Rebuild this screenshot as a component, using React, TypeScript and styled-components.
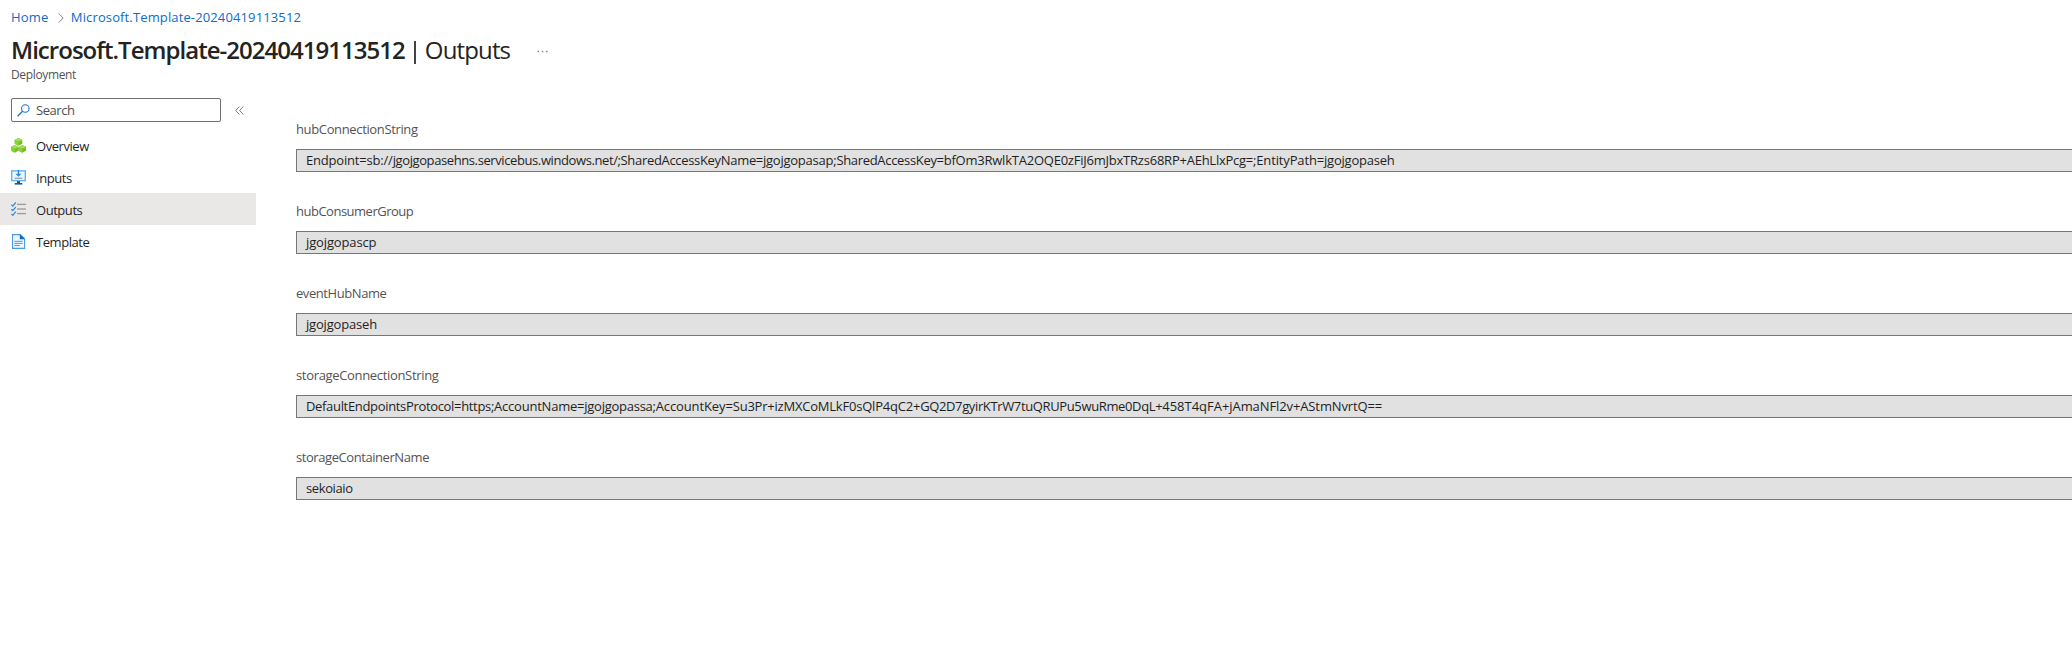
import React from 'react';
import styled, { createGlobalStyle } from 'styled-components';

const GlobalStyle = createGlobalStyle`
  * { box-sizing: border-box; }
  body {
    margin: 0;
    background: #fff;
    overflow: hidden;
    color: #1f1f1f;
    font-family: 'Open Sans', 'Noto Sans', sans-serif;
    font-size: 13px;
  }
`;

const Page = styled.div`
  height: 665px;
  padding-top: 7px;
  overflow: hidden;
`;

const Breadcrumb = styled.nav`
  display: flex;
  align-items: center;
  height: 20px;
  padding-left: 11px;
`;

const Crumb = styled.a<{ $tracking?: number }>`
  color: #0b6ccb;
  line-height: 20px;
  letter-spacing: ${p => p.$tracking ?? 0}px;
  text-decoration: none;
`;

const CrumbChevron = styled.svg`
  width: 6px;
  height: 10px;
  margin: 2px 7px 0 9.5px;
`;

const Header = styled.header`
  padding: 7px 0 0 11px;
`;

const TitleRow = styled.div`
  display: flex;
  align-items: center;
  height: 32px;
`;

const Title = styled.h1`
  display: flex;
  margin: 0;
  color: #242322;
  font-size: 24px;
  font-weight: 600;
  line-height: 32px;
  letter-spacing: -0.97px;
  white-space: pre;
`;

const TitleDivider = styled.span`
  width: 2px;
  height: 23px;
  margin: 7px 9px 0 9px;
  background: #444342;
`;

const TitleSection = styled.span`
  font-weight: 400;
  letter-spacing: -0.85px;
`;

const MoreDots = styled.svg`
  width: 11px;
  height: 3px;
  margin: 2px 0 0 27px;
`;

const Subtitle = styled.div`
  padding-top: 1px;
  height: 16px;
  color: #555352;
  font-size: 12px;
  line-height: 16px;
  letter-spacing: -0.36px;
`;

const Body = styled.div`
  display: flex;
`;

const Sidebar = styled.aside`
  flex: none;
  width: 256px;
  padding-top: 16px;
`;

const SearchRow = styled.div`
  display: flex;
  align-items: center;
  padding-left: 11px;
`;

const SearchBox = styled.div`
  display: flex;
  align-items: center;
  width: 210px;
  height: 24px;
  padding-left: 5px;
  border: 1px solid #72706f;
  border-radius: 2px;
  color: #504e4d;
  letter-spacing: -0.45px;
`;

const SearchIcon = styled.svg`
  width: 13px;
  height: 13px;
  margin-right: 6px;
`;

const CollapseIcon = styled.svg`
  width: 9px;
  height: 9px;
  margin-left: 14px;
`;

const NavList = styled.ul`
  margin: 7px 0 0;
  padding: 0;
  list-style: none;
`;

const NavItem = styled.li<{ $active?: boolean }>`
  display: flex;
  align-items: center;
  height: 32px;
  padding-left: 11px;
  background: ${p => (p.$active ? '#e9e8e6' : 'transparent')};
`;

const NavIcon = styled.svg`
  width: 15px;
  height: 15px;
  margin: 1px 10px 0 0;
`;

const NavLabel = styled.span`
  padding-top: 1px;
  line-height: 20px;
  letter-spacing: -0.45px;
`;

const Main = styled.main`
  flex: 1;
  min-width: 0;
  padding: 37px 0 0 40px;
`;

const Field = styled.div`
  margin-bottom: 29px;
`;

const FieldLabel = styled.div<{ $tracking: number }>`
  height: 20px;
  margin-bottom: 10px;
  color: #555352;
  line-height: 20px;
  letter-spacing: ${p => p.$tracking}px;
`;

const FieldValue = styled.div`
  height: 23px;
  padding-left: 9px;
  border: 1px solid #777675;
  border-right: 0;
  background: #e1e1e1;
  line-height: 21px;
  white-space: nowrap;
`;

const Run = styled.span<{ $tracking: number }>`
  letter-spacing: ${p => p.$tracking}px;
`;

const CubesGlyph = () => (
  <NavIcon viewBox="0 0 15 15">
    {[[7.5, 0], [3.7, 7], [11.3, 7]].map(([x, y]) => (
      <g key={x} transform={`translate(${x} ${y})`}>
        <path d="M0 0 3.8 1.9V5.8L0 7.8-3.8 5.8V1.9Z" fill="#76bc2d" />
        <path d="M0 0 3.8 1.9 0 3.8-3.8 1.9Z" fill="#a5e04c" />
        <path d="M-3.8 1.9 0 3.8V7.8L-3.8 5.8Z" fill="#86d633" />
      </g>
    ))}
  </NavIcon>
);

const MonitorGlyph = () => (
  <NavIcon viewBox="0 0 15 15">
    <rect x="0.7" y="0.9" width="13.6" height="9.7" fill="#eef8fe" stroke="#62b5ec" strokeWidth="1.4" />
    <path d="M6.8 0h1.4v3.8h2.3L7.5 6.8 4.5 3.8h2.3Z" fill="#2b88d8" />
    <path d="M3.6 8.2h7.8" stroke="#8a9199" strokeWidth="1.1" />
    <path d="M6 11.2h3v2H6Z" fill="#17498c" />
    <path d="M3.7 13h7.6v1.6H3.7Z" fill="#27539a" />
  </NavIcon>
);

const ChecklistGlyph = () => (
  <NavIcon viewBox="0 0 15 15">
    {[2.4, 7, 11.6].map(y => (
      <g key={y} fill="none">
        <path d={`M0.4 ${y + 0.2}l1.4 1.5 3-3.6`} stroke="#2b88d8" strokeWidth="1.2" />
        <path d={`M6 ${y}h9`} stroke="#9b9a99" strokeWidth="1.3" />
      </g>
    ))}
  </NavIcon>
);

const DocumentGlyph = () => (
  <NavIcon viewBox="0 0 15 15">
    <path d="M1.5 0.6h7.8l4.3 4.2v9.6H1.5Z" fill="#eef6fd" stroke="#4a9be2" strokeWidth="1.1" />
    <path d="M8.8 0.3 13.9 5.2H8.8Z" fill="#1267bd" />
    <path d="M3.4 7.3h8.2M3.4 9.4h8.2M3.4 11.5h5.4" stroke="#4a9be2" strokeWidth="1" />
  </NavIcon>
);

const navItems = [
  { label: 'Overview', Glyph: CubesGlyph },
  { label: 'Inputs', Glyph: MonitorGlyph },
  { label: 'Outputs', Glyph: ChecklistGlyph, active: true },
  { label: 'Template', Glyph: DocumentGlyph },
];

type TextRun = [text: string, tracking: number];

const fields: { name: string; tracking: number; value: TextRun[] }[] = [
  {
    name: 'hubConnectionString',
    tracking: -0.36,
    value: [
      ['Endpoint=sb://', -0.19],
      ['jgojgopasehns.servicebus.windows.net/;', -0.4],
      ['SharedAccessKeyName=', -0.32],
      ['jgojgopasap;', -0.24],
      ['SharedAccessKey=', -0.323],
      ['bfOm3RwlkTA2OQE0zFiJ6mJbxTRzs68RP+', -0.227],
      ['AEhLlxPcg=;', -0.249],
      ['EntityPath=', -0.14],
      ['jgojgopaseh', -0.23],
    ],
  },
  { name: 'hubConsumerGroup', tracking: -0.5, value: [['jgojgopascp', -0.14]] },
  { name: 'eventHubName', tracking: -0.43, value: [['jgojgopaseh', -0.18]] },
  {
    name: 'storageConnectionString',
    tracking: -0.33,
    value: [
      ['DefaultEndpointsProtocol=https;', -0.33],
      ['AccountName=', -0.213],
      ['jgojgopassa;', -0.261],
      ['AccountKey=', -0.116],
      ['Su3Pr+izMXCoMLkF0sQlP4qC2+', -0.215],
      ['GQ2D7gyirKTrW7tuQRUPu5wuRme0DqL+', -0.365],
      ['458T4qFA+', -0.012],
      ['jAmaNFl2v+', -0.1],
      ['AStmNvrtQ==', -0.119],
    ],
  },
  { name: 'storageContainerName', tracking: -0.43, value: [['sekoiaio', -0.4]] },
];

export default function App() {
  return (
    <Page>
      <GlobalStyle />
      <Breadcrumb>
        <Crumb $tracking={0.15}>Home</Crumb>
        <CrumbChevron viewBox="0 0 6 10">
          <path d="M0.7 0.5 5.2 5 0.7 9.5" fill="none" stroke="#858483" strokeWidth="1" />
        </CrumbChevron>
        <Crumb $tracking={0.13}>Microsoft.Template-20240419113512</Crumb>
      </Breadcrumb>
      <Header>
        <TitleRow>
          <Title>
            Microsoft.Template-20240419113512
            <TitleDivider />
            <TitleSection>Outputs</TitleSection>
          </Title>
          <MoreDots viewBox="0 0 11 3" fill="#777">
            <rect x="0.5" y="0.8" width="1.4" height="1.4" />
            <rect x="4.8" y="0.8" width="1.4" height="1.4" />
            <rect x="9.1" y="0.8" width="1.4" height="1.4" />
          </MoreDots>
        </TitleRow>
        <Subtitle>Deployment</Subtitle>
      </Header>
      <Body>
        <Sidebar>
          <SearchRow>
            <SearchBox>
              <SearchIcon viewBox="0 0 13 13" fill="none" stroke="#1b74cf">
                <circle cx="8.3" cy="4.5" r="3.8" strokeWidth="1.1" />
                <path d="M5.6 7.2 0.6 12.2" strokeWidth="1.3" />
              </SearchIcon>
              Search
            </SearchBox>
            <CollapseIcon viewBox="0 0 9 9" fill="none" stroke="#6b6a69" strokeWidth="0.9">
              <path d="M4.4 0.5 0.7 4.5 4.4 8.5M8.3 0.5 4.6 4.5 8.3 8.5" />
            </CollapseIcon>
          </SearchRow>
          <NavList>
            {navItems.map(({ label, Glyph, active }) => (
              <NavItem key={label} $active={active}>
                <Glyph />
                <NavLabel>{label}</NavLabel>
              </NavItem>
            ))}
          </NavList>
        </Sidebar>
        <Main>
          {fields.map(({ name, tracking, value }) => (
            <Field key={name}>
              <FieldLabel $tracking={tracking}>{name}</FieldLabel>
              <FieldValue>
                {value.map(([text, runTracking]) => (
                  <Run key={text} $tracking={runTracking}>{text}</Run>
                ))}
              </FieldValue>
            </Field>
          ))}
        </Main>
      </Body>
    </Page>
  );
}
